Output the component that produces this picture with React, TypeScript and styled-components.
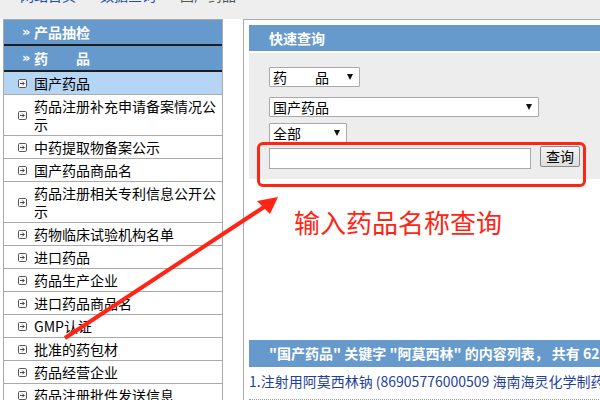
import React from 'react';
import styled, { createGlobalStyle } from 'styled-components';

const GlobalStyle = createGlobalStyle`
  html, body {
    margin: 0;
    padding: 0;
    width: 600px;
    height: 400px;
    overflow: hidden;
    background: #fff;
  }
  * {
    box-sizing: border-box;
  }
`;

const Page = styled.div`
  position: relative;
  width: 600px;
  height: 400px;
  overflow: hidden;
  font-family: "Noto Sans CJK SC", "Noto Sans", sans-serif;
  font-size: 14px;
  color: #000;
`;

const Breadcrumb = styled.div`
  height: 19px;
  background: #eeeeee;
  overflow: hidden;
  padding-left: 20px;
`;

const Crumbs = styled.div`
  display: flex;
  margin-top: -15px;
  line-height: 20px;
  white-space: nowrap;
`;

const Crumb = styled.span<{ $muted?: boolean }>`
  color: ${p => (p.$muted ? '#555' : '#1a4ea0')};
`;

const Sep = styled.span`
  width: 24px;
  text-align: center;
  color: #555;
`;

const Main = styled.div`
  display: flex;
  align-items: flex-start;
  gap: 20px;
  padding-left: 3px;
  background: #fff;
`;

const LeftPanel = styled.div`
  flex: none;
  width: 220px;
  border: 1px solid #aaaaaa;
  border-bottom: none;
`;

const NavHeader = styled.div`
  display: flex;
  align-items: center;
  height: 26px;
  padding-left: 18px;
  background: #6699cc;
  border-bottom: 2px solid #1e1e1e;
  color: #fff;
  font-weight: bold;
  line-height: 24px;
`;

const Raquo = styled.span`
  width: 12px;
  font-size: 13px;
  font-family: "DejaVu Sans", sans-serif;
`;

const NavItem = styled.div<{ $active?: boolean }>`
  display: flex;
  align-items: center;
  padding: 2px 4px 2px 14px;
  line-height: 18px;
  border-bottom: 1px solid #aaaaaa;
  background: ${p => (p.$active ? '#b5d5f5' : '#fff')};
`;

const ItemIcon = styled.svg`
  flex: none;
  width: 9px;
  height: 9px;
  margin-right: 7px;
`;

const ItemText = styled.span`
  flex: 1;
`;

const RightPanel = styled.div`
  flex: none;
  width: 800px;
  height: 400px;
  border-left: 1px solid #aaaaaa;
  border-top: 1px solid #aaaaaa;
  padding: 5px 0 0 5px;
`;

const BlueBar = styled.div<{ $h: number }>`
  height: ${p => p.$h}px;
  line-height: ${p => p.$h}px;
  padding-left: 20px;
  background: #6699cc;
  color: #fff;
  font-weight: bold;
  white-space: nowrap;
  overflow: hidden;
`;

const QueryBody = styled.div`
  margin-top: 2px;
  background: #ededed;
  padding: 14px 20px 10px;
  display: flex;
  flex-direction: column;
  align-items: flex-start;
`;

const Select = styled.div<{ $w: number; $gap: number }>`
  position: relative;
  width: ${p => p.$w}px;
  height: 20px;
  margin-top: ${p => p.$gap}px;
  border: 1px solid #a9a9a9;
  background: #fff;
  padding-left: 3px;
  line-height: 18px;
  border-radius: 1px;

  &::after {
    content: '';
    position: absolute;
    right: 6px;
    top: 6px;
    border-left: 3.5px solid transparent;
    border-right: 3.5px solid transparent;
    border-top: 6px solid #111;
  }
`;

const SearchRow = styled.div`
  display: flex;
  align-items: flex-start;
  gap: 9px;
  margin-top: 4px;
`;

const SearchInput = styled.div`
  width: 262px;
  height: 21px;
  margin-top: 1px;
  border: 1px solid #a9a9a9;
  background: #fff;
`;

const SearchButton = styled.div`
  width: 40px;
  height: 21px;
  margin-top: -1px;
  border: 1px solid #8a8a8a;
  border-radius: 2px;
  background: linear-gradient(#f4f4f4, #dedede);
  text-align: center;
  line-height: 19px;
`;

const ResultBar = styled(BlueBar)`
  margin-top: 161px;
`;

const ResultLine = styled.div`
  padding-top: 4px;
  height: 33px;
  line-height: 20px;
  color: #1f3f9c;
  white-space: nowrap;
  border-bottom: 1px dotted #999;
`;

const RedBox = styled.div`
  position: absolute;
  left: 257px;
  top: 142px;
  width: 329px;
  height: 45px;
  border: 3px solid #ff2414;
  border-radius: 6px;
`;

const RedNote = styled.div`
  position: absolute;
  left: 294px;
  top: 205px;
  font-size: 26px;
  line-height: 34px;
  color: #ff2414;
  white-space: nowrap;
`;

const ArrowSvg = styled.svg`
  position: absolute;
  left: 0;
  top: 0;
  pointer-events: none;
`;

const items = [
  '国产药品',
  '药品注册补充申请备案情况公示',
  '中药提取物备案公示',
  '国产药品商品名',
  '药品注册相关专利信息公开公示',
  '药物临床试验机构名单',
  '进口药品',
  '药品生产企业',
  '进口药品商品名',
  'GMP认证',
  '批准的药包材',
  '药品经营企业',
  '药品注册批件发送信息',
];

const BoxArrow = () => (
  <ItemIcon viewBox="0 0 9 9">
    <rect x="0.5" y="0.5" width="8" height="8" rx="1.2" fill="#fff" stroke="#555" />
    <path d="M2 4.5h4.2M4.3 2.6l1.9 1.9-1.9 1.9" fill="none" stroke="#333" strokeWidth="0.9" />
  </ItemIcon>
);

export default function App() {
  return (
    <Page>
      <GlobalStyle />
      <Breadcrumb>
        <Crumbs>
          <Crumb>网站首页</Crumb>
          <Sep>»</Sep>
          <Crumb>数据查询</Crumb>
          <Sep>»</Sep>
          <Crumb $muted>国产药品</Crumb>
        </Crumbs>
      </Breadcrumb>
      <Main>
        <LeftPanel>
          <NavHeader>
            <Raquo>»</Raquo>
            产品抽检
          </NavHeader>
          <NavHeader>
            <Raquo>»</Raquo>
            药　　品
          </NavHeader>
          {items.map((t, i) => (
            <NavItem key={t} $active={i === 0}>
              <BoxArrow />
              <ItemText>{t}</ItemText>
            </NavItem>
          ))}
        </LeftPanel>
        <RightPanel>
          <BlueBar $h={26}>快速查询</BlueBar>
          <QueryBody>
            <Select $w={91} $gap={0}>药　　品</Select>
            <Select $w={270} $gap={10}>国产药品</Select>
            <Select $w={78} $gap={6}>全部</Select>
            <SearchRow>
              <SearchInput />
              <SearchButton>查询</SearchButton>
            </SearchRow>
          </QueryBody>
          <ResultBar $h={27}>"国产药品" 关键字 "阿莫西林" 的内容列表， 共有 62 条记录</ResultBar>
          <ResultLine>1.注射用阿莫西林钠 (86905776000509 海南海灵化学制药有限公司)</ResultLine>
        </RightPanel>
      </Main>
      <RedBox />
      <RedNote>输入药品名称查询</RedNote>
      <ArrowSvg width="600" height="400" viewBox="0 0 600 400">
        <line x1="65" y1="338" x2="264" y2="207" stroke="#ff2414" strokeWidth="4" />
        <polygon points="278,197 257,201 263,207 270,214" fill="#ff2414" />
      </ArrowSvg>
    </Page>
  );
}
